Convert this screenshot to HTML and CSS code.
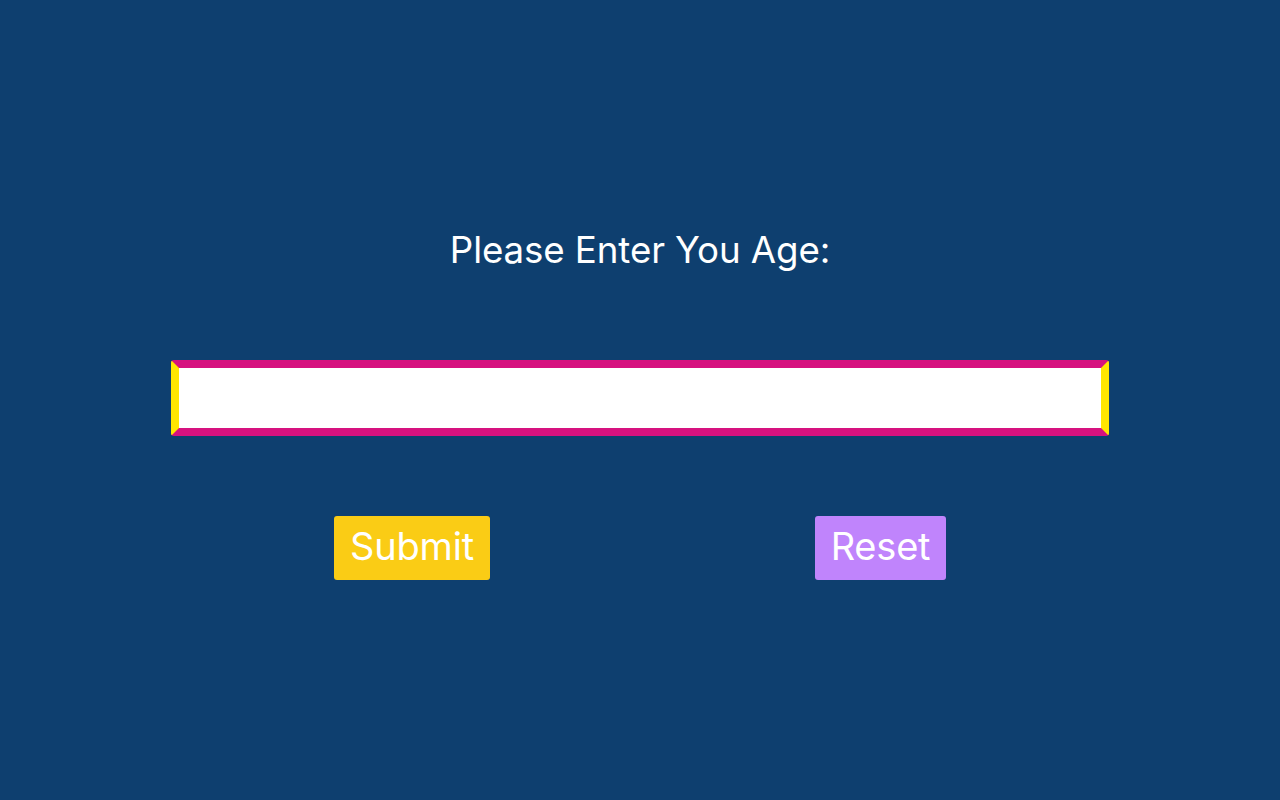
FILE: index.html
```html
<!DOCTYPE html>
<html>
<head>
<meta charset="utf-8">
<link rel="stylesheet" href="styles.css">
</head>
<body>
<main class="page">
  <h1 class="title">Please Enter You Age:</h1>
  <input class="age-input" type="text">
  <div class="actions">
    <button class="btn btn-submit">Submit</button>
    <button class="btn btn-reset">Reset</button>
  </div>
</main>
</body>
</html>
```

FILE: styles.css
```css
html, body {
  margin: 0;
  padding: 0;
  background: #0e3f6f;
  height: 100%;
}
body {
  font-family: Inter, "Noto Sans", sans-serif;
  color: #ffffff;
}
.page {
  display: flex;
  flex-direction: column;
  align-items: center;
  padding-top: 226px;
}
.title {
  margin: 0;
  font-size: 36.7px;
  font-weight: 400;
  line-height: 48px;
  letter-spacing: -0.1px;
}
.age-input {
  box-sizing: border-box;
  width: 938px;
  height: 76px;
  margin-top: 86px;
  border-style: solid;
  border-width: 8px;
  border-color: #d6127f #ffe600;
  border-radius: 3px;
  background: #ffffff;
  outline: none;
  padding: 0 12px;
  font-size: 24px;
}
.actions {
  box-sizing: border-box;
  width: 938px;
  display: flex;
  padding-left: 163px;
  gap: 325px;
  margin-top: 80px;
}
.btn {
  height: 64px;
  border: none;
  border-radius: 3px;
  color: #ffffff;
  font-family: Inter, "Noto Sans", sans-serif;
  font-size: 38px;
  line-height: 60px;
  padding: 0 0 4px;
  letter-spacing: -0.2px;
  cursor: pointer;
}
.btn-submit {
  background: #facc15;
  width: 156px;
}
.btn-reset {
  background: #c084fc;
  width: 131px;
}
```
